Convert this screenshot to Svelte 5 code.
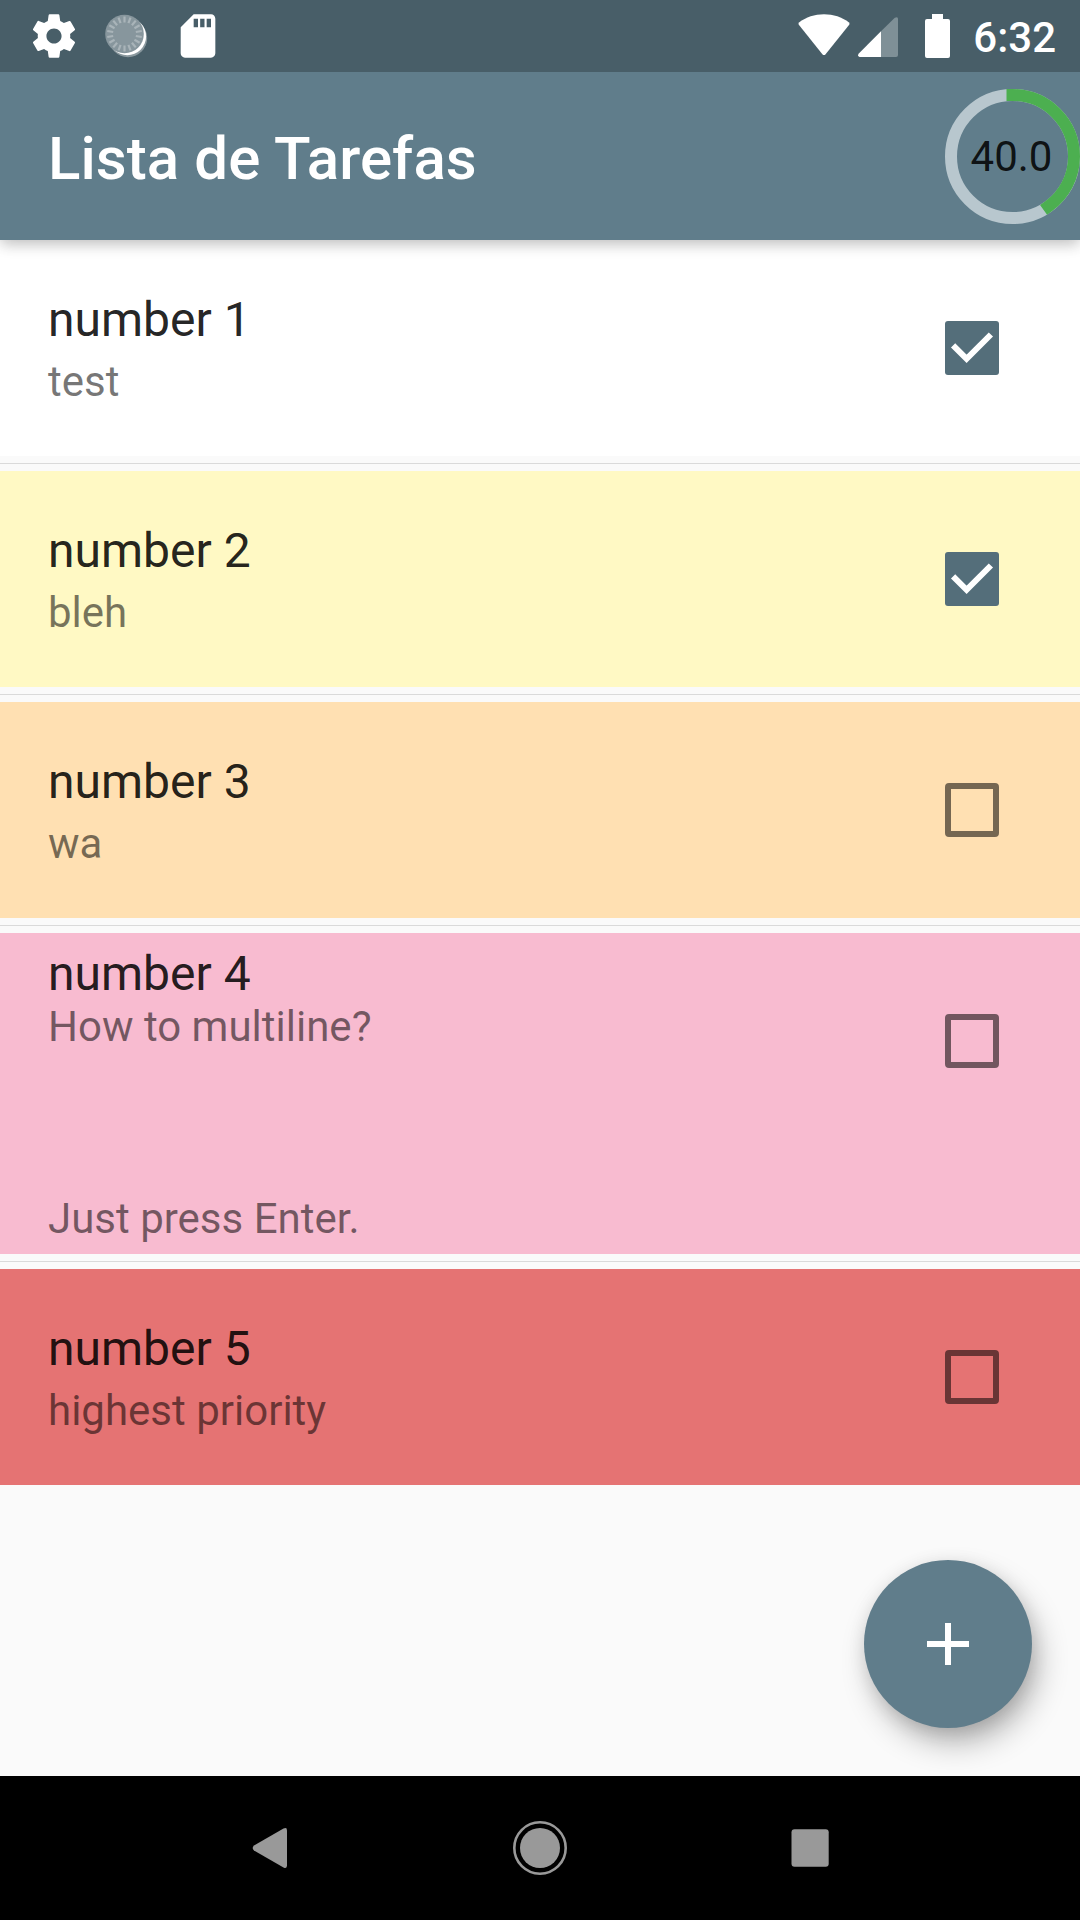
<script>
  const tasks = [
    { title: 'number 1', note: 'test', done: true, tone: 'white' },
    { title: 'number 2', note: 'bleh', done: true, tone: 'yellow' },
    { title: 'number 3', note: 'wa', done: false, tone: 'orange' },
    { title: 'number 4', note: 'How to multiline?\n\n\n\nJust press Enter.', done: false, tone: 'pink', tall: true },
    { title: 'number 5', note: 'highest priority', done: false, tone: 'red' }
  ];
  const percent = 40;
  const radius = 61.5;
  const circumference = 2 * Math.PI * radius;
  const arc = (circumference * percent) / 100;
  const ticks = Array.from({ length: 18 }, (_, i) => i * 20);
</script>

<div class="screen">
  <div class="status">
    <svg class="gear" viewBox="0 0 24 24"><path fill="#fff" d="M19.43 12.98c.04-.32.07-.64.07-.98s-.03-.66-.07-.98l2.11-1.65c.19-.15.24-.42.12-.64l-2-3.46c-.12-.22-.39-.3-.61-.22l-2.49 1c-.52-.4-1.08-.73-1.69-.98l-.38-2.65C14.46 2.18 14.25 2 14 2h-4c-.25 0-.46.18-.49.42l-.38 2.65c-.61.25-1.17.59-1.69.98l-2.49-1c-.23-.09-.49 0-.61.22l-2 3.46c-.13.22-.07.49.12.64l2.11 1.65c-.04.32-.07.65-.07.98s.03.66.07.98l-2.11 1.65c-.19.15-.24.42-.12.64l2 3.46c.12.22.39.3.61.22l2.49-1c.52.4 1.08.73 1.69.98l.38 2.65c.03.24.24.42.49.42h4c.25 0 .46-.18.49-.42l.38-2.65c.61-.25 1.17-.59 1.69-.98l2.49 1c.23.09.49 0 .61-.22l2-3.46c.12-.22.07-.49-.12-.64l-2.11-1.65zM12 15.5c-1.93 0-3.5-1.57-3.5-3.5s1.57-3.5 3.5-3.5 3.5 1.57 3.5 3.5-1.57 3.5-3.5 3.5z" /></svg>
    <svg class="sync" viewBox="0 0 48 48">
      <circle cx="24" cy="25" r="19.2" fill="#8b999f" />
      <circle cx="23.3" cy="23.4" r="18.8" fill="#fff" />
      <circle cx="20.5" cy="21" r="19.3" fill="#87969d" />
      {#each ticks as angle}
        <line x1="20.5" y1="3.500" x2="20.5" y2="9.500" stroke="#a9b4b9" stroke-width="2.200" transform="rotate({angle} 20.5 21)" />
      {/each}
    </svg>
    <svg class="card" viewBox="0 0 24 24"><path fill="#fff" d="M18 2h-8L4.02 8 4 20c0 1.1.9 2 2 2h12c1.1 0 2-.9 2-2V4c0-1.1-.9-2-2-2zm-6 6h-2V4h2v4zm3 0h-2V4h2v4zm3 0h-2V4h2v4z" /></svg>
    <span class="grow"></span>
    <svg class="wifi" viewBox="0 0 52 42"><path fill="#fff" d="M1 8.400C8 3 16.700 .2 26 .2S44 3 51 8.400Q52 9.600 51.200 10.800L27.600 40.200Q26 42 24.400 40.200L.8 10.800Q0 9.600 1 8.400Z" /></svg>
    <svg class="signal" viewBox="0 0 40 40">
      <path fill="#7f9097" d="M23 14.300 36.800 .8Q40 -1 40 2V38Q40 40 38 40H23Z" />
      <path fill="#fff" d="M23 14.300V40H1.500Q-1 39 .8 36.500Z" />
    </svg>
    <svg class="battery" viewBox="0 0 25 44"><path fill="#fff" d="M7 0H18V5H23Q25 5 25 7V42Q25 44 23 44H2Q0 44 0 42V7Q0 5 2 5H7Z" /></svg>
    <span class="time">6:32</span>
  </div>

  <header class="appbar">
    <h1>Lista de Tarefas</h1>
    <div class="progress">
      <svg viewBox="0 0 135 135">
        <circle cx="67.5" cy="67.5" r={radius} fill="none" stroke="#b8c7ce" stroke-width="12" />
        <circle cx="67.5" cy="67.5" r={radius} fill="none" stroke="#4caf50" stroke-width="12" stroke-linecap="square" stroke-dasharray="{arc} {circumference}" transform="rotate(-90 67.5 67.5)" />
      </svg>
      <span>{percent.toFixed(1)}</span>
    </div>
  </header>

  <main>
    {#each tasks as task}
      <section class="task {task.tone}" class:tall={task.tall}>
        <div class="text">
          <div class="title">{task.title}</div>
          <div class="note">{task.note}</div>
        </div>
        <svg class="box" viewBox="0 0 54 54">
          {#if task.done}
            <rect width="54" height="54" rx="3" fill="#546e7a" />
            <path d="M8.100 24.300 21.600 37.800 45.900 13.500" fill="none" stroke="#fff" stroke-width="6" />
          {:else}
            <rect x="3" y="3" width="48" height="48" rx="1" fill="none" stroke="#000" stroke-opacity=".54" stroke-width="6" />
          {/if}
        </svg>
      </section>
    {/each}
    <button class="fab" aria-label="Adicionar">
      <svg viewBox="0 0 42 42"><path d="M18 0h6v18h18v6H24v18h-6V24H0v-6h18z" fill="#fff" /></svg>
    </button>
  </main>

  <nav>
    <svg viewBox="0 0 54 54"><path fill="#999" d="M40.500 7.600Q44 5.800 44 9.500V44.500Q44 48.200 40.500 46.400L11 29.500Q8.400 27 11 24.500Z" /></svg>
    <svg viewBox="0 0 54 54"><circle cx="27" cy="27" r="25.700" fill="none" stroke="#999" stroke-width="2.600" /><circle cx="27" cy="27" r="20" fill="#999" /></svg>
    <svg viewBox="0 0 54 54"><rect x="8.500" y="8.300" width="37.200" height="37.400" rx="3" fill="#999" /></svg>
  </nav>
</div>

<style>
  :global(body) { margin: 0; }
  .screen { width: 1080px; height: 1920px; display: flex; flex-direction: column; overflow: hidden; background: #fafafa; font-family: Roboto, sans-serif; }
  svg { display: block; flex: none; }
  .status { height: 72px; flex: none; box-sizing: border-box; padding: 0 24px 0 28px; display: flex; align-items: flex-start; background: #485e68; position: relative; z-index: 2; }
  .gear, .card { width: 52px; height: 52px; margin-top: 10px; }
  .sync { width: 48px; height: 48px; margin: 13px 20px 0 24px; }
  .grow { flex: 1; }
  .wifi { width: 52px; height: 42px; margin: 14px 8px 0 0; }
  .signal { width: 40px; height: 40px; margin: 17px 27px 0 0; }
  .battery { width: 25px; height: 44px; margin: 14px 23px 0 0; }
  .time { color: #fff; font-size: 42px; font-weight: 500; line-height: 76px; }
  .appbar { height: 168px; flex: none; display: flex; align-items: center; justify-content: space-between; padding-left: 48px; background: #607d8b; position: relative; z-index: 1; box-shadow: 0 5px 14px -1px rgba(0, 0, 0, .2), 0 2px 16px rgba(0, 0, 0, .09); }
  h1 { margin: 5px 0 0; color: #fff; font-size: 60px; font-weight: 500; line-height: 70px; letter-spacing: .08px; }
  .progress { width: 135px; height: 135px; display: grid; place-items: center; }
  .progress > * { grid-area: 1 / 1; }
  .progress svg { width: 135px; height: 135px; }
  .progress span { padding: 2px 2px 0 0; font-size: 42px; line-height: 50px; color: rgba(0, 0, 0, .87); }
  main { flex: 1; min-height: 0; position: relative; display: flex; flex-direction: column; }
  .task { height: 216px; flex: none; box-sizing: border-box; padding: 52px 81px 0 48px; display: flex; justify-content: space-between; align-items: flex-start; }
  .task + .task { margin-top: 15px; position: relative; }
  .task + .task::before { content: ''; position: absolute; left: 0; right: 0; top: -8px; height: 1px; background: #dadada; }
  .text { display: flex; flex-direction: column; gap: 10px; }
  .title { font-size: 48px; line-height: 56px; color: rgba(0, 0, 0, .87); }
  .note { font-size: 42px; line-height: 48px; white-space: pre-line; color: rgba(0, 0, 0, .54); }
  .box { width: 54px; height: 54px; margin-top: 29px; }
  .tall { height: 321px; padding-top: 13px; }
  .tall .text { gap: 1px; }
  .tall .box { margin-top: 68px; }
  .white { background: #fff; }
  .yellow { background: #fff9c4; }
  .orange { background: #ffe0b2; }
  .pink { background: #f8bbd0; }
  .red { background: #e57373; }
  .fab { position: absolute; right: 48px; bottom: 48px; width: 168px; height: 168px; padding: 0; border: 0; border-radius: 50%; display: grid; place-items: center; background: #607d8b; box-shadow: 7px 16px 32px -3px rgba(0, 0, 0, .32), 1px 4px 18px rgba(0, 0, 0, .1); }
  .fab svg { width: 42px; height: 42px; }
  nav { height: 144px; flex: none; box-sizing: border-box; padding: 0 243px; display: flex; align-items: center; justify-content: space-between; background: #000; z-index: 1; }
  nav svg { width: 54px; height: 54px; }
</style>
